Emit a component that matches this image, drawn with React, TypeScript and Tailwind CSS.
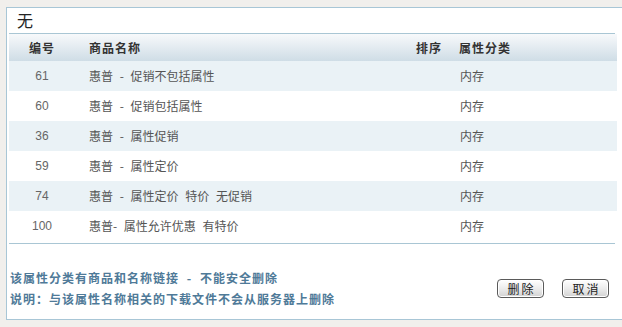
const rows = [
  { id: "61", name: "惠普 - 促销不包括属性", cat: "内存" },
  { id: "60", name: "惠普 - 促销包括属性", cat: "内存" },
  { id: "36", name: "惠普 - 属性促销", cat: "内存" },
  { id: "59", name: "惠普 - 属性定价", cat: "内存" },
  { id: "74", name: "惠普 - 属性定价 特价 无促销", cat: "内存" },
  { id: "100", name: "惠普- 属性允许优惠 有特价", cat: "内存" },
];

function Btn({ label }: { label: string }) {
  return (
    <button className="w-[47px] h-[19px] rounded-[4px] border border-[#5a5a5a] bg-gradient-to-b from-[#ffffff] via-[#ececec] to-[#d2d2d2] shadow-[inset_0_0_0_1px_#ffffff] text-[12px] leading-[17px] text-[#222] tracking-[2px] pl-[2px]">
      {label}
    </button>
  );
}

export default function App() {
  return (
    <div className="w-[622px] h-[327px] bg-[#f1efec] pt-[7px] pl-[6px] overflow-hidden font-['Noto_Sans_CJK_SC',sans-serif]">
      <div className="w-[640px] h-[313px] bg-white border-l border-t border-b border-[#a8c6d6]">
        {/* 标题 */}
        <div className="h-[25px] pl-[10px] text-[16px] leading-[25px] text-[#222]">无</div>

        <div className="ml-[2px] w-[608px]">
          <div className="h-px bg-[#a9c6d4] mr-[2px]" />
          {/* 表头 */}
          <div className="flex h-[27px] items-center bg-gradient-to-b from-[#f7f9fb] to-[#cfdde6] text-[12px] font-bold tracking-[1px] text-[#333]">
            <div className="w-[66px] text-center">编号</div>
            <div className="w-[333px] pl-[14px]">商品名称</div>
            <div className="w-[51px] pl-[8px]">排序</div>
            <div>属性分类</div>
          </div>
          {rows.map((r, i) => (
            <div
              key={r.id}
              className={`flex h-[30px] items-center text-[12px] text-[#555] ${i % 2 === 0 ? "bg-[#eaf2f6]" : "bg-white"}`}
            >
              <div className="w-[66px] text-center font-['Liberation_Sans',sans-serif] text-[#666]">{r.id}</div>
              <div className="w-[333px] pl-[14px] whitespace-pre [word-spacing:4px]">{r.name}</div>
              <div className="w-[51px]" />
              <div className="pl-[1px]">{r.cat}</div>
            </div>
          ))}
          <div className="h-[2px]" />
          <div className="h-px bg-[#a9c6d4] mr-[2px]" />

          {/* 底部 */}
          <div className="flex items-center justify-between pt-[23px] pr-[8px]">
            <div className="text-[12px] font-bold leading-[21px] tracking-[1px] text-[#4f7a98] pl-[1px] [word-spacing:4px]">
              <div>该属性分类有商品和名称链接 - 不能安全删除</div>
              <div>说明：与该属性名称相关的下载文件不会从服务器上删除</div>
            </div>
            <div className="flex gap-[18px] pt-[1px]">
              <Btn label="删除" />
              <Btn label="取消" />
            </div>
          </div>
        </div>
      </div>
    </div>
  );
}
